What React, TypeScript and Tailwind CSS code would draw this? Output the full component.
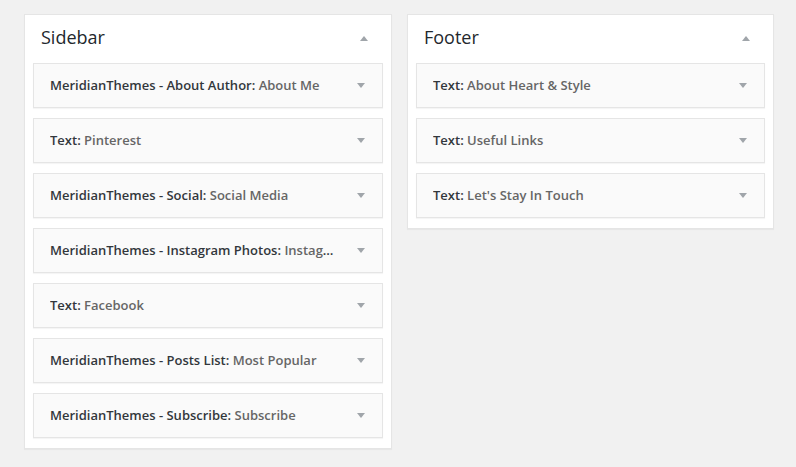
import React from "react";

type Widget = { name: string; title: string };

const sidebarWidgets: Widget[] = [
  { name: "MeridianThemes - About Author", title: "About Me" },
  { name: "Text", title: "Pinterest" },
  { name: "MeridianThemes - Social", title: "Social Media" },
  { name: "MeridianThemes - Instagram Photos", title: "Instagram Photos" },
  { name: "Text", title: "Facebook" },
  { name: "MeridianThemes - Posts List", title: "Most Popular" },
  { name: "MeridianThemes - Subscribe", title: "Subscribe" },
];

const footerWidgets: Widget[] = [
  { name: "Text", title: "About Heart & Style" },
  { name: "Text", title: "Useful Links" },
  { name: "Text", title: "Let's Stay In Touch" },
];

function Arrow({ up }: { up?: boolean }) {
  return (
    <svg width="10" height="6" viewBox="0 0 10 6" className="shrink-0">
      <path d={up ? "M1 6 L5 1 L9 6 Z" : "M1 0 L5 5 L9 0 Z"} fill="#a0a5aa" />
    </svg>
  );
}

function WidgetRow({ widget }: { widget: Widget }) {
  return (
    <div className="flex h-[45px] items-center border border-[#e5e5e5] bg-[#fafafa] pl-[16px] pr-[16px] shadow-[0_1px_1px_rgba(0,0,0,0.04)]">
      <div className="min-w-0 flex-1 truncate pr-[22px] text-[13px] font-semibold text-[#32373c]">
        {widget.name}: <span className="text-[#666]">{widget.title}</span>
      </div>
      <Arrow />
    </div>
  );
}

function SidebarPanel({ title, widgets, width }: { title: string; widgets: Widget[]; width: string }) {
  return (
    <section className={`${width} border border-[#e5e5e5] bg-white px-[8px] pb-[10px] shadow-[0_1px_1px_rgba(0,0,0,0.04)]`}>
      <div className="flex h-[48px] items-center justify-between pb-[3px] pl-[8px] pr-[14px]">
        <h2 className="text-[18px] font-normal text-[#23282d]">{title}</h2>
        <Arrow up />
      </div>
      <div className="flex flex-col gap-[10px]">
        {widgets.map((w) => (
          <WidgetRow key={w.name + w.title} widget={w} />
        ))}
      </div>
    </section>
  );
}

export default function App() {
  return (
    <div
      className="flex min-h-[467px] items-start gap-[15px] bg-[#f1f1f1] pl-[24px] pt-[14px]"
      style={{ fontFamily: '"Open Sans", "Noto Sans", sans-serif' }}
    >
      <SidebarPanel title="Sidebar" widgets={sidebarWidgets} width="w-[368px]" />
      <SidebarPanel title="Footer" widgets={footerWidgets} width="w-[367px]" />
    </div>
  );
}
